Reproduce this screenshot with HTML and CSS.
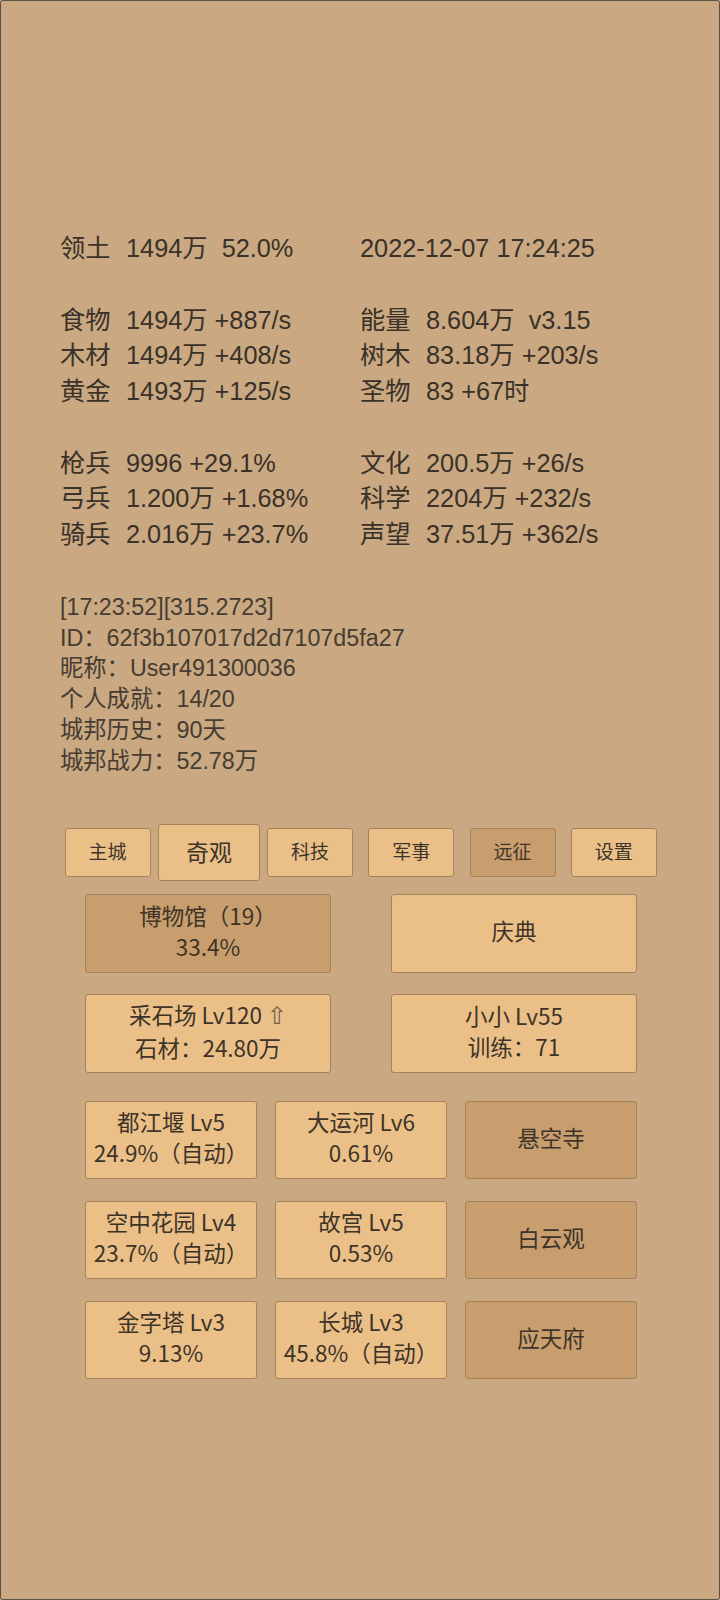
FILE: index.html
```html
<!DOCTYPE html>
<html lang="zh">
<head>
<meta charset="utf-8">
<title>城邦</title>
<link rel="stylesheet" href="styles.css">
</head>
<body>
<div class="screen">
  <div class="stats">
    <div class="row"><span class="lbl">领土</span>1494万&nbsp;&nbsp;52.0%</div>
    <div class="row">2022-12-07 17:24:25</div>
    <div class="row blank"></div><div class="row blank"></div>
    <div class="row"><span class="lbl">食物</span>1494万 +887/s</div>
    <div class="row"><span class="lbl">能量</span>8.604万&nbsp;&nbsp;v3.15</div>
    <div class="row"><span class="lbl">木材</span>1494万 +408/s</div>
    <div class="row"><span class="lbl">树木</span>83.18万 +203/s</div>
    <div class="row"><span class="lbl">黄金</span>1493万 +125/s</div>
    <div class="row"><span class="lbl">圣物</span>83 +67时</div>
    <div class="row blank"></div><div class="row blank"></div>
    <div class="row"><span class="lbl">枪兵</span>9996 +29.1%</div>
    <div class="row"><span class="lbl">文化</span>200.5万 +26/s</div>
    <div class="row"><span class="lbl">弓兵</span>1.200万 +1.68%</div>
    <div class="row"><span class="lbl">科学</span>2204万 +232/s</div>
    <div class="row"><span class="lbl">骑兵</span>2.016万 +23.7%</div>
    <div class="row"><span class="lbl">声望</span>37.51万 +362/s</div>
  </div>

  <div class="info">
    <div class="iline">[17:23:52][315.2723]</div>
    <div class="iline">ID：62f3b107017d2d7107d5fa27</div>
    <div class="iline">昵称：User491300036</div>
    <div class="iline">个人成就：14/20</div>
    <div class="iline">城邦历史：90天</div>
    <div class="iline">城邦战力：52.78万</div>
  </div>

  <div class="tabs">
    <div class="slot"><div class="tab">主城</div></div>
    <div class="slot"><div class="tab selected">奇观</div></div>
    <div class="slot"><div class="tab">科技</div></div>
    <div class="slot"><div class="tab">军事</div></div>
    <div class="slot"><div class="tab dark">远征</div></div>
    <div class="slot"><div class="tab">设置</div></div>
  </div>

  <div class="grid2">
    <div class="btn dark"><div>博物馆（19）</div><div>33.4%</div></div>
    <div class="btn"><div>庆典</div></div>
    <div class="btn"><div>采石场 Lv120 <span class="up">⇧</span></div><div>石材：24.80万</div></div>
    <div class="btn"><div>小小 Lv55</div><div>训练：71</div></div>
  </div>

  <div class="grid3">
    <div class="btn"><div>都江堰 Lv5</div><div>24.9%（自动）</div></div>
    <div class="btn"><div>大运河 Lv6</div><div>0.61%</div></div>
    <div class="btn dark"><div>悬空寺</div></div>
    <div class="btn"><div>空中花园 Lv4</div><div>23.7%（自动）</div></div>
    <div class="btn"><div>故宫 Lv5</div><div>0.53%</div></div>
    <div class="btn dark"><div>白云观</div></div>
    <div class="btn"><div>金字塔 Lv3</div><div>9.13%</div></div>
    <div class="btn"><div>长城 Lv3</div><div>45.8%（自动）</div></div>
    <div class="btn dark"><div>应天府</div></div>
  </div>
</div>
</body>
</html>
```

FILE: styles.css
```css
html, body {
  margin: 0;
  padding: 0;
  background: #c9a882;
}

.screen {
  box-sizing: border-box;
  width: 720px;
  height: 1600px;
  border: 1px solid #55524d;
  border-radius: 3px;
  background: #c9a882;
  overflow: hidden;
  padding-top: 230px;
  color: #3a3128;
  font-family: "Liberation Sans", "Noto Sans CJK SC", sans-serif;
}

.stats {
  display: grid;
  grid-template-columns: 300px 300px;
  margin-left: 59px;
  font-size: 25.3px;
  white-space: nowrap;
}

.row {
  height: 35.75px;
  line-height: 35.75px;
  overflow: visible;
}

.lbl {
  display: inline-block;
  width: 66px;
}

.info {
  margin-top: 39px;
  margin-left: 59px;
  font-size: 23.3px;
  color: #463c31;
  white-space: nowrap;
}

.iline {
  height: 30.8px;
  line-height: 30.8px;
}

.tabs {
  display: grid;
  grid-template-columns: repeat(6, 101.25px);
  margin-top: 47px;
  margin-left: 56px;
  height: 57px;
  align-items: center;
}

.slot {
  display: flex;
  justify-content: center;
  align-items: center;
}

.tab {
  box-sizing: border-box;
  width: 86px;
  height: 49px;
  padding-bottom: 3px;
  display: flex;
  align-items: center;
  justify-content: center;
  background: #ebc088;
  border: 1px solid #a4825b;
  border-radius: 3px;
  font-family: "Noto Sans CJK SC", sans-serif;
  font-size: 19px;
  color: #3d3429;
}

.tab.selected {
  width: 102px;
  height: 57px;
  font-size: 23px;
}

.tab.dark {
  background: #c99e6e;
}

.grid2, .grid3 {
  display: grid;
  margin-left: 84px;
  width: 552px;
  row-gap: 21.5px;
  grid-auto-rows: 78.5px;
}

.grid2 {
  margin-top: 13.5px;
  grid-template-columns: 246px 246px;
  column-gap: 60px;
}

.grid3 {
  margin-top: 28px;
  grid-template-columns: 172px 172px 172px;
  column-gap: 18px;
}

.btn {
  box-sizing: border-box;
  display: flex;
  flex-direction: column;
  justify-content: center;
  align-items: center;
  padding-bottom: 5px;
  background: #ebc088;
  border: 1px solid #a4825b;
  border-radius: 3px;
  font-family: "Noto Sans CJK SC", sans-serif;
  font-size: 22.5px;
  line-height: 31px;
  color: #3d3327;
  white-space: nowrap;
}

.btn.dark {
  background: #c99e6e;
}

.up {
  font-family: "DejaVu Sans", sans-serif;
  font-size: 24px;
  color: #6e6252;
}
```
